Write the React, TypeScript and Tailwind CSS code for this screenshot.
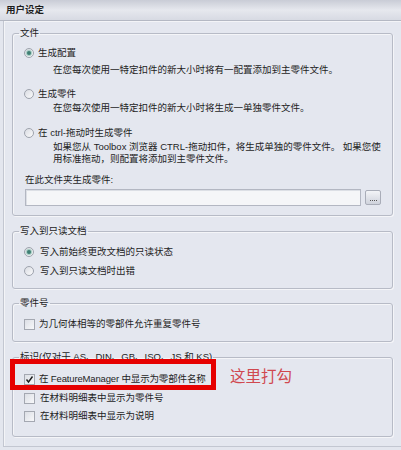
import React from "react";

const font = { fontFamily: '"Liberation Sans", "Noto Sans CJK SC", sans-serif' };

function Radio({ checked }: { checked?: boolean }) {
  return (
    <span className="relative flex h-[10px] w-[10px] shrink-0 items-center justify-center rounded-full border border-[#9ea3ad] bg-gradient-to-br from-[#d9dce2] to-[#fbfbfc]">
      {checked && <span className="h-[4px] w-[4px] rounded-full bg-[#3f7f74] shadow-[0_0_1px_1px_#9fc9bf]" />}
    </span>
  );
}

function Check({ checked }: { checked?: boolean }) {
  return (
    <span className="flex h-[11px] w-[11px] shrink-0 items-center justify-center border border-[#a4a8b1] bg-gradient-to-br from-[#dcdfe5] to-[#f7f8fa]">
      {checked && (
        <svg width="9" height="9" viewBox="0 0 9 9">
          <path d="M1.5 4.5 L3.5 7 L7.5 1.5" stroke="#1c1c1c" strokeWidth="1.4" fill="none" />
        </svg>
      )}
    </span>
  );
}

function Group({ title, className, children }: { title: string; className?: string; children: React.ReactNode }) {
  return (
    <fieldset
      className={
        "mx-[8px] rounded-[3px] border border-[#b7bbc6] px-[6px] shadow-[inset_1px_1px_0_#f4f5f8,1px_1px_0_#f4f5f8] " +
        (className ?? "")
      }
    >
      <legend className="h-[12px] px-[1px] text-[9.5px] leading-[12px] text-[#1e1e1e]">{title}</legend>
      {children}
    </fieldset>
  );
}

export default function App() {
  return (
    <div
      className="relative h-[450px] w-[401px] overflow-hidden bg-[#e3e6ee] text-[9.5px] text-[#1e1e1e]"
      style={font}
    >
      {/* Title bar */}
      <div className="flex h-[21px] items-center border-b border-[#b4b8c3] bg-gradient-to-b from-[#c9ccd6] via-[#e6e8ee] to-[#d7dae3] pl-[6px] text-[9.5px] font-bold leading-[12px]">
        用户设定
      </div>

      {/* Panel */}
      <div className="ml-[3px] flex h-[426px] flex-col border-b border-l border-[#c3c7d1] bg-[#e4e7ef] shadow-[inset_1px_1px_0_#f3f4f7]">
        <Group title="文件" className="mt-[6px] pb-[9px]">
          <div className="flex flex-col leading-[14px]">
            <div className="mt-[7px] flex h-[14px] items-center gap-[4px] pl-[5px]">
              <Radio checked />
              <span>生成配置</span>
            </div>
            <div className="mt-[3px] h-[14px] pl-[34px]">在您每次使用一特定扣件的新大小时将有一配置添加到主零件文件。</div>
            <div className="mt-[10px] flex h-[14px] items-center gap-[4px] pl-[5px]">
              <Radio />
              <span>生成零件</span>
            </div>
            <div className="h-[14px] pl-[34px]">在您每次使用一特定扣件的新大小时将生成一单独零件文件。</div>
            <div className="mt-[11px] flex h-[14px] items-center gap-[4px] pl-[5px]">
              <Radio />
              <span>在 ctrl-拖动时生成零件</span>
            </div>
            <div className="mt-[1px] pl-[34px] pr-[4px] leading-[12px]">
              如果您从 Toolbox 浏览器 CTRL-拖动扣件，将生成单独的零件文件。 如果您使用标准拖动，则配置将添加到主零件文件。
            </div>
            <div className="mt-[9px] h-[12px] pl-[6px] leading-[12px]">在此文件夹生成零件:</div>
            <div className="mt-[3px] flex h-[17px] items-center pl-[6px]">
              <div className="h-[17px] w-[336px] border border-[#b3b7c2] bg-[#f5f6f8] shadow-[inset_1px_1px_0_#dcdfe5]" />
              <div className="ml-[4px] flex h-[15px] w-[16px] items-end justify-center rounded-[2px] border border-[#a9adb8] bg-gradient-to-b from-[#f3f4f7] to-[#cfd3dc] pb-[3px]">
                <span className="block h-[1px] w-[7px] border-t border-dotted border-[#555]" />
              </div>
            </div>
          </div>
        </Group>

        <Group title="写入到只读文档" className="mt-[9px] pb-[10px]">
          <div className="flex flex-col leading-[14px]">
            <div className="mt-[8px] flex h-[14px] items-center gap-[6px] pl-[5px]">
              <Radio checked />
              <span>写入前始终更改文档的只读状态</span>
            </div>
            <div className="mt-[5px] flex h-[14px] items-center gap-[6px] pl-[5px]">
              <Radio />
              <span>写入到只读文档时出错</span>
            </div>
          </div>
        </Group>

        <Group title="零件号" className="mt-[8px] pb-[10px]">
          <div className="flex flex-col leading-[14px]">
            <div className="mt-[8px] flex h-[14px] items-center gap-[4px] pl-[5px]">
              <Check />
              <span>为几何体相等的零部件允许重复零件号</span>
            </div>
          </div>
        </Group>

        <Group title="标识(仅对于 AS、DIN、GB、ISO、JS 和 KS)" className="mt-[9px] pb-[13px]">
          <div className="flex flex-col leading-[14px]">
            <div className="mt-[9px] flex h-[14px] items-center gap-[4px] pl-[5px]">
              <Check checked />
              <span className="tracking-[-0.15px]">在 FeatureManager 中显示为零部件名称</span>
            </div>
            <div className="mt-[5px] flex h-[14px] items-center gap-[5px] pl-[5px]">
              <Check />
              <span>在材料明细表中显示为零件号</span>
            </div>
            <div className="mt-[4px] flex h-[14px] items-center gap-[5px] pl-[5px]">
              <Check />
              <span>在材料明细表中显示为说明</span>
            </div>
          </div>
        </Group>
      </div>

      {/* Annotation overlay */}
      <div className="absolute left-[10px] top-[359px] h-[31px] w-[206px] border-[5px] border-[#e60000]" />
      <div className="absolute left-[230px] top-[367px] text-[15.5px] leading-[20px] text-[#d0484f]">这里打勾</div>
    </div>
  );
}
